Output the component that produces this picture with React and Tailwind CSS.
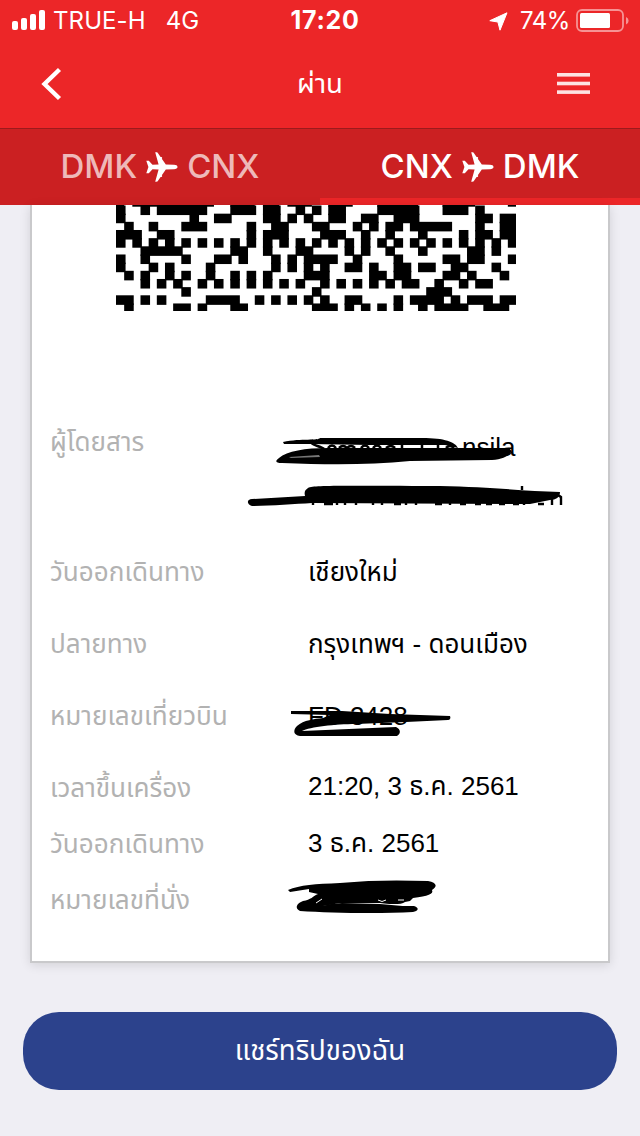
const CELL = 400 / 49

// [first column, last column] of every dark run, top row first
const barcodeRows = [
  [[0, 0], [3, 3], [5, 10], [14, 16], [18, 19], [22, 22], [24, 24], [26, 27], [32, 36], [40, 42], [44, 44]],
  [[0, 0], [9, 9], [12, 13], [18, 19], [21, 21], [23, 23], [26, 27], [30, 31], [34, 36], [44, 45], [47, 48]],
  [[1, 1], [4, 4], [8, 10], [16, 16], [19, 20], [24, 25], [29, 29], [31, 31], [33, 34], [36, 40], [44, 44], [47, 48]],
  [[0, 2], [5, 6], [16, 16], [18, 20], [25, 27], [30, 30], [33, 33], [37, 37], [42, 42], [44, 45], [47, 48]],
  [[0, 0], [2, 2], [4, 4], [6, 6], [8, 8], [10, 10], [12, 12], [14, 14], [16, 16], [18, 18], [20, 20], [22, 22], [24, 24], [26, 26], [28, 28], [30, 30], [32, 32], [34, 34], [36, 36], [38, 38], [40, 40], [42, 42], [44, 44], [46, 46], [48, 48]],
  [[3, 7], [14, 15], [18, 18], [22, 23], [28, 28], [30, 30], [33, 33], [37, 37], [43, 44], [46, 46]],
  [[0, 0], [3, 3], [8, 8], [12, 13], [15, 15], [19, 19], [21, 21], [23, 26], [29, 29], [34, 34], [40, 41], [43, 44], [48, 48]],
  [[0, 0], [4, 4], [6, 6], [11, 11], [19, 19], [21, 21], [23, 23], [25, 25], [28, 29], [31, 31], [34, 35], [37, 38], [41, 42], [46, 46]],
  [[1, 1], [3, 3], [6, 6], [8, 8], [11, 11], [14, 14], [16, 16], [18, 18], [23, 25], [31, 32], [34, 35], [40, 41], [43, 43], [47, 47]],
  [[3, 3], [5, 5], [7, 7], [10, 10], [12, 12], [14, 14], [16, 16], [18, 18], [20, 20], [22, 22], [25, 25], [27, 27], [29, 29], [31, 31], [33, 33], [35, 36], [39, 39], [42, 42], [44, 45]],
  [[8, 8], [24, 24], [38, 40]],
  [[0, 1], [3, 3], [5, 5], [11, 14], [17, 17], [19, 19], [21, 21], [23, 23], [25, 25], [28, 29], [34, 34], [36, 39], [41, 41], [43, 45], [47, 48]],
  [[1, 1], [7, 8], [10, 10], [14, 15], [24, 26], [28, 28], [30, 30], [32, 32], [34, 34], [37, 37], [39, 42], [45, 47]],
]

const topSliver = [[0, 0], [2, 11], [14, 16], [18, 19], [21, 23], [26, 28], [32, 36], [40, 43], [48, 48]]

function Barcode() {
  return (
    <svg width="400" height="106" viewBox="0 0 400 106" className="block">
      {topSliver.map(([a, b]) => (
        <rect key={a} x={a * CELL} y="0" width={(b - a + 1) * CELL} height="1.7" />
      ))}
      {barcodeRows.map((runs, row) =>
        runs.map(([a, b]) => (
          <rect
            key={`${row}-${a}`}
            x={a * CELL}
            y={row * CELL + 0.5}
            width={(b - a + 1) * CELL + 1.4}
            height={CELL + 1.4}
          />
        ))
      )}
    </svg>
  )
}

function StatusBar() {
  return (
    <div className="flex h-10 items-center pl-3 pr-[11px] pt-0.5 font-['Inter'] text-[24px] text-white">
      <div className="flex flex-1 items-center">
        <svg className="-mt-0.5" width="34" height="22" viewBox="0 0 34 22" fill="#fff">
          <rect x="0" y="12" width="6" height="9" rx="2" />
          <rect x="9" y="9" width="6" height="12" rx="2" />
          <rect x="18" y="5" width="6" height="16" rx="2" />
          <rect x="27" y="1" width="6" height="20" rx="2" />
        </svg>
        <span className="ml-[7px] tracking-[0.1px]">TRUE-H</span>
        <span className="ml-5">4G</span>
      </div>
      <span className="pl-[9px] text-[25px] font-bold tracking-[0.7px]">17:20</span>
      <div className="flex flex-1 items-center justify-end">
        <svg width="19" height="19" viewBox="0 0 19 19" fill="#fff">
          <path d="M18 0.8 L0.8 8.7 L8.9 10 L11 18.2 Z" stroke="#fff" strokeWidth="1" strokeLinejoin="round" />
        </svg>
        <span className="ml-3 tracking-[-0.4px]">74%</span>
        <svg className="-mt-0.5 ml-[6px]" width="53" height="23" viewBox="0 0 53 23">
          <rect x="1" y="1" width="46" height="21" rx="5" fill="none" stroke="#fff" strokeOpacity="0.5" strokeWidth="1.8" />
          <rect x="4" y="4" width="30" height="15" rx="1.5" fill="#fff" />
          <path d="M50 8 a4 4 0 0 1 0 7.5 Z" fill="#fff" fillOpacity="0.5" />
        </svg>
      </div>
    </div>
  )
}

function NavBar() {
  return (
    <div className="flex h-[88px] items-center justify-between pl-[41px] pr-[50px]">
      <svg width="21" height="34" viewBox="0 0 21 34" fill="none" stroke="#fff" strokeWidth="4.4">
        <path d="M18.5 2.5 L3.5 17 L18.5 31.5" />
      </svg>
      <h1 className="pl-[21px] text-[27.5px] leading-none text-white">ผ่าน</h1>
      <svg width="33" height="22" viewBox="0 0 33 22" fill="#fff" fillOpacity="0.87">
        <rect y="0" width="33" height="3.6" />
        <rect y="8.7" width="33" height="3.6" />
        <rect y="17.3" width="33" height="3.6" />
      </svg>
    </div>
  )
}

function Plane() {
  return (
    <svg className="mt-[6px]" width="32" height="30" viewBox="0 0 32 30" fill="#fff">
      <path d="M31.5 15 C31.5 16.4 30 17.2 28 17.2 L19.8 17.4 L12 28.8 C11.6 29.5 11.2 29.7 10.5 29.7 L9.2 29.7 L12.6 17.4 L6.5 17.2 L2.8 21.3 L0.3 21.3 L2.4 15 L0.3 8.7 L2.8 8.7 L6.5 12.8 L12.6 12.6 L9.2 0.3 L10.5 0.3 C11.2 0.3 11.6 0.5 12 1.2 L19.8 12.6 L28 12.8 C30 12.8 31.5 13.6 31.5 15 Z" />
      <rect x="12.6" y="5" width="3.6" height="2" rx="1" />
      <rect x="12.6" y="23" width="3.6" height="2" rx="1" />
    </svg>
  )
}

function Tab({ from, to, active }) {
  return (
    <div
      className={`flex flex-1 items-center justify-center gap-[9px] border-b-[7px] font-['Inter'] text-[33px] font-medium ${
        active ? 'border-[#ec2628] text-white' : 'border-transparent text-white/70'
      }`}
    >
      <span className="pt-[5px] leading-none">{from}</span>
      <Plane />
      <span className="pt-[5px] leading-none">{to}</span>
    </div>
  )
}

function Row({ label, height, children }) {
  return (
    <div className={`flex items-center text-[26px] leading-none ${height}`}>
      <span className="w-[258px] text-[26.1px] text-[#b2b2b2]">{label}</span>
      <span className="text-black">{children}</span>
    </div>
  )
}

function Passengers() {
  return (
    <div className="relative flex h-[129px]">
      <span className="w-[258px] pt-[9px] text-[26px] leading-none text-[#b2b2b2]">ผู้โดยสาร</span>
      <span className="pl-[154px] pt-[14px] text-[26px] leading-none text-black">nsila</span>
      <svg className="absolute left-[190px] top-0" width="340" height="100" viewBox="0 0 340 100">
        <path d="M43 22 C62 18 78 21 80 18 L182 18 C205 18 215 22 218 28 L205 25 L130 25 L70 24 L44 24 Z" />
        <path d="M73 20 C68 26 80 25 84 29 M88 28 q4 -5 8 0 M99 28 q4 -4 8 0 q4 -4 8 0 M121 28 q4 -5 8 0 M133 28 q4 -5 8 0 M146 28 q5 -4 9 0 M162 28 V24 M182 28 V24 M198 28 V24 M206 28 q4 -4 8 0" fill="none" stroke="#000" strokeWidth="2.5" />
        <path d="M39 38 C47 31 65 28 88 28 L268 28 C276 31 268 39 252 40 L170 41 C130 45 90 45 42 43 C35 43 35 41 39 38 Z" />
        <path d="M49 37 L79 35 L80 37 L51 38 Z" fill="#777" />
        <path d="M68 68 C75 65 100 66 200 66 C250 67 285 71 320 72 C320 77 316 80 310 80 L290 84 L72 83 C55 84 30 86 12 86 C6 84 7 79 12 79 L65 76 C64 72 65 70 68 68 Z" />
        <path d="M73 85 V82 M84 84 h9 M97 85 V82 M105 85 V82 M116 85 V82 M133 85 V82 M142 85 V82 M154 84 h7 M166 85 V82 M176 85 V82 M195 84 h7 M210 85 V82 M220 84 h6 M235 84 h6 M246 84 h6 M259 84 h6 M273 84 h6 M284 85 V82 M298 84 h6 M312 85 V77 q4 -4 9 0 V85 M282 66 V70" fill="none" stroke="#000" strokeWidth="2.4" />
      </svg>
    </div>
  )
}

export default function App() {
  return (
    <div className="flex h-[1136px] w-[640px] flex-col overflow-hidden bg-[#efeef4] font-['Liberation_Sans','Noto_Sans_Thai','Noto_Sans_Thai_Looped',sans-serif]">
      <header className="bg-[#ec2628]">
        <StatusBar />
        <NavBar />
        <div className="flex h-[77px] border-t border-[#9c1a1c] bg-[#cb2022]">
          <Tab from="DMK" to="CNX" />
          <Tab from="CNX" to="DMK" active />
        </div>
      </header>

      <main className="mx-[30px] h-[758px] border-2 border-t-0 border-[#c9c9cb] bg-white shadow-[0_2px_10px_rgba(0,0,0,0.12)]">
        <div className="pl-[84px]">
          <Barcode />
        </div>
        <div className="pl-[18px] pt-[109px]">
          <Passengers />
          <Row label="วันออกเดินทาง" height="h-[46px]">เชียงใหม่</Row>
          <Row label="ปลายทาง" height="h-[98px]">กรุงเทพฯ - ดอนเมือง</Row>
          <Row label="หมายเลขเที่ยวบิน" height="h-[46px]">
            <span className="relative block">
              FD 3428
              <svg className="absolute -left-7 -top-[13px]" width="180" height="60" viewBox="0 0 180 60">
                <path d="M11 21 L62 21 L110 24 L170 26 C171 28 170 30 168 30 L126 32 L76 34 C55 34 30 37 22 41 L116 37 C121 39 121 44 117 46 L20 46 C13 45 13 40 17 36 C24 30 34 29 43 28 L50 25 L11 24 Z" />
              </svg>
            </span>
          </Row>
          <Row label="เวลาขึ้นเครื่อง" height="h-[98px]">
            <span className="block pb-1">21:20, 3 ธ.ค. 2561</span>
          </Row>
          <Row label="วันออกเดินทาง" height="h-[14px]">
            <span className="block pb-[3px]">3 ธ.ค. 2561</span>
          </Row>
          <Row label="หมายเลขที่นั่ง" height="h-[98px]">
            <svg className="-ml-7 mb-[10px] block" width="180" height="60" viewBox="0 0 180 60">
              <path d="M8 25 C20 20 35 19 60 18 C90 15 120 15 148 16 C158 18 157 22 152 25 C154 29 148 31 133 33 L130 36 L125 37 C120 41 102 38 97 38 L60 38 L43 41 L134 41 C140 43 138 46 133 47 C100 49 50 48 20 46 C14 43 17 38 23 36 C31 35 33 31 38 29 L29 27 L29 24 L10 27 Z" />
              <path d="M36 38 L42 34 M98 35 q4 3 8 0 M118 35 h6" fill="none" stroke="#fff" strokeWidth="1" />
              <path d="M40 40 L62 38 L100 39 L134 42 L60 43 Z" />
            </svg>
          </Row>
        </div>
      </main>

      <button
        type="button"
        className="mx-[23px] mt-[49px] h-[78px] rounded-[36px] bg-[#2c428c] pb-px text-[27.6px] leading-none text-white"
      >
        แชร์ทริปของฉัน
      </button>
    </div>
  )
}
